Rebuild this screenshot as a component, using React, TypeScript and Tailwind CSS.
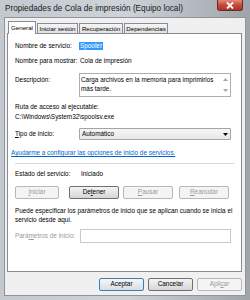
import React from 'react';

function Btn({ children, w, disabled, def, className = '' }: { children: React.ReactNode; w: string; disabled?: boolean; def?: boolean; className?: string }) {
    const base = 'h-[13px] flex items-center justify-center rounded-[2px] border leading-none';
    const look = disabled
        ? 'border-[#b5b9bc] bg-[#f4f4f4] text-[#9a9a9a]'
        : def
            ? 'border-[#3c7fb1] bg-gradient-to-b from-[#f4f6f8] to-[#d9dde2] text-black'
            : 'border-[#707070] bg-gradient-to-b from-[#f4f4f4] to-[#d6d6d6] text-black';
    return <div className={`${base} ${look} ${w} ${className}`}>{children}</div>;
}

export default function App() {
    return (
        <div className="w-[250px] h-[300px] flex flex-col bg-gradient-to-r from-[#c4c9cf] via-[#cdd3d9] to-[#9ea4aa] font-['Liberation_Sans',Arial,sans-serif] text-[6.4px] text-black overflow-hidden">
            {/* title bar */}
            <div className="h-[17px] flex items-start shrink-0">
                <span className="pl-[5px] pt-[4px] text-[8.2px] leading-[10px] text-[#1a1a1a]">Propiedades de Cola de impresión (Equipo local)</span>
                <div className="ml-auto mr-[7px] w-[26px] h-[11px] rounded-b-[3px] border border-t-0 border-[#6b2a24] bg-gradient-to-b from-[#e1897a] via-[#c9463a] to-[#b33025] flex items-center justify-center">
                    <svg width="8" height="7" viewBox="0 0 8 7">
                        <path d="M1 0.5 L7 6.5 M7 0.5 L1 6.5" stroke="#ffffff" strokeWidth="1.8" />
                    </svg>
                </div>
            </div>

            {/* client area */}
            <div className="flex-1 mx-[4px] mb-[4px] bg-[#f0f0f0] border border-[#8d949b] flex flex-col pl-[2px] pr-[3px]">
                {/* tabs */}
                <div className="mt-[3px] h-[12px] flex items-end pl-[1px] relative z-10 text-[6.2px] whitespace-nowrap">
                    <div className="h-[13px] -mb-px w-[28px] bg-white border border-b-0 border-[#898c95] flex items-center justify-center pb-[1px]">General</div>
                    <div className="h-[10px] w-[41px] ml-px bg-gradient-to-b from-[#f5f5f5] to-[#e2e2e2] border border-b-0 border-[#898c95] flex items-center justify-center">Iniciar sesión</div>
                    <div className="h-[10px] w-[44px] ml-px bg-gradient-to-b from-[#f5f5f5] to-[#e2e2e2] border border-b-0 border-[#898c95] flex items-center justify-center">Recuperación</div>
                    <div className="h-[10px] w-[44px] ml-px bg-gradient-to-b from-[#f5f5f5] to-[#e2e2e2] border border-b-0 border-[#898c95] flex items-center justify-center">Dependencias</div>
                </div>

                {/* panel */}
                <div className="h-[239px] bg-white border border-[#898c95] flex flex-col pl-[7px] pr-[10px]">
                    <div className="mt-[7px] h-[10px] flex items-center">
                        <span className="w-[65px]">Nombre de servicio:</span>
                        <span className="bg-[#3399ff] text-white px-[1px] leading-[8px] -ml-px">Spooler</span>
                    </div>
                    <div className="mt-[5px] h-[10px] flex items-center">
                        <span className="w-[65px]">Nombre para mostrar:</span>
                        <span>Cola de impresión</span>
                    </div>
                    <div className="mt-[7px] flex items-start">
                        <span className="w-[64px] pt-[3px] leading-[8px]">Descripción:</span>
                        <div className="flex-1 h-[24px] border border-[#abadb3] flex">
                            <div className="flex-1 pl-[1px] pt-[1px] leading-[9px]">Carga archivos en la memoria para imprimirlos más tarde.</div>
                            <div className="w-[9px] flex flex-col items-center justify-between py-[4px]">
                                <svg width="5" height="3" viewBox="0 0 5 3"><path d="M0 3 L2.5 0 L5 3 Z" fill="#a8a8a8" /></svg>
                                <svg width="5" height="3" viewBox="0 0 5 3"><path d="M0 0 L2.5 3 L5 0 Z" fill="#a8a8a8" /></svg>
                            </div>
                        </div>
                    </div>
                    <div className="mt-[5px] h-[10px] flex items-center">Ruta de acceso al ejecutable:</div>
                    <div className="h-[10px] flex items-center">C:\Windows\System32\spoolsv.exe</div>
                    <div className="mt-[6px] h-[12px] flex items-center">
                        <span className="w-[64px]"><span className="underline">T</span>ipo de inicio:</span>
                        <div className="flex-1 h-[12px] border border-[#a5a5a5] rounded-[1px] bg-gradient-to-b from-[#f6f6f6] to-[#e8e8e8] flex items-center pl-[2px] pr-[2px]">
                            <span className="flex-1">Automático</span>
                            <svg width="5" height="3" viewBox="0 0 5 3"><path d="M0 0 L5 0 L2.5 3 Z" fill="#000" /></svg>
                        </div>
                    </div>
                    <div className="mt-[8px] h-[10px] flex items-center -ml-[4px]">
                        <span className="text-[#0066cc] underline">Ayudarme a configurar las opciones de inicio de servicios.</span>
                    </div>
                    <div className="mt-[5px] h-px bg-[#d9d9d9] -mr-[3px]" />
                    <div className="mt-[5px] h-[10px] flex items-center">
                        <span className="w-[66px]">Estado del servicio:</span>
                        <span>Iniciado</span>
                    </div>
                    <div className="mt-[7px] flex">
                        <Btn w="w-[44px]" disabled><span className="underline">I</span>niciar</Btn>
                        <Btn w="w-[50px]" className="ml-[10px]">De<span className="underline">t</span>ener</Btn>
                        <Btn w="w-[50px]" className="ml-[4px]" disabled><span className="underline">P</span>ausar</Btn>
                        <Btn w="w-[50px]" className="ml-[6px]" disabled><span className="underline">R</span>eanudar</Btn>
                    </div>
                    <div className="mt-[7px] leading-[9px] -mr-[8px] whitespace-nowrap">
                        <div>Puede especificar los parámetros de inicio que se aplican cuando se inicia el</div>
                        <div>servicio desde aquí.</div>
                    </div>
                    <div className="mt-[5px] h-[14px] flex items-center">
                        <span className="w-[65px] text-[#9a9a9a]">Pará<span className="underline">m</span>etros de inicio:</span>
                        <div className="flex-1 h-[14px] border border-[#c7c9cc] bg-white" />
                    </div>
                </div>

                {/* dialog buttons */}
                <div className="mt-[6px] flex justify-end">
                    <Btn w="w-[45px]" def>Aceptar</Btn>
                    <Btn w="w-[45px]" className="ml-[4px]">Cancelar</Btn>
                    <Btn w="w-[45px]" className="ml-[4px]" disabled>Apli<span className="underline">c</span>ar</Btn>
                </div>
            </div>
        </div>
    );
}
